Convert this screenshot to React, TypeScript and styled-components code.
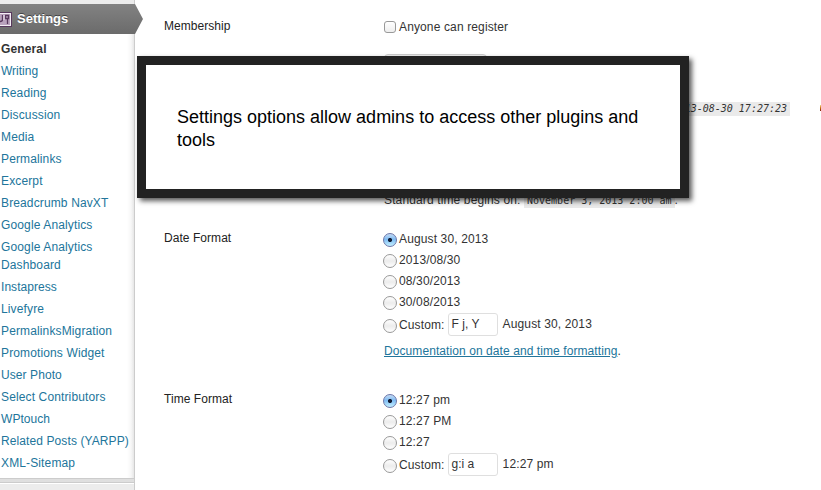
import React from 'react';
import styled, { createGlobalStyle, css } from 'styled-components';

const Global = createGlobalStyle`
  *, *::before, *::after { box-sizing: border-box; }
  body { margin: 0; background: #fff; overflow: hidden; }
`;

const Page = styled.div`
  position: relative;
  display: flex;
  width: 821px;
  height: 490px;
  overflow: hidden;
  background: #fff;
  color: #222;
  font: 12px/18px 'Liberation Sans', Arial, sans-serif;
  letter-spacing: 0.13px;
`;

const Sidebar = styled.nav`
  flex: 0 0 135px;
  min-width: 0;
  display: flex;
  flex-direction: column;
  padding-top: 4px;
  background: #ececec;
  border-right: 1px solid #ccc;
`;

const MenuHead = styled.div`
  position: relative;
  display: flex;
  align-items: center;
  width: 143px;
  height: 30px;
  flex: none;
  gap: 5px;
  background: linear-gradient(#828282, #6b6b6b);
  clip-path: polygon(0 0, 135px 0, 143px 50%, 135px 100%, 0 100%);
  color: #fff;
  font-size: 13px;
  font-weight: bold;
  letter-spacing: 0;
  text-shadow: 0 -1px 0 #444;
`;

const MenuList = styled.ul`
  flex: none;
  height: 444px;
  margin: 0;
  padding: 4px 0 0;
  list-style: none;
  background: linear-gradient(to left, #e6e6e6, #f7f7f7 3px, #fff 7px);
`;

const MenuItem = styled.li<{ $current?: boolean; $spacing?: number }>`
  padding: 2px 0 2px 1px;
  width: 134px;
  white-space: pre-line;
  color: #21759b;
  ${p => p.$spacing !== undefined && css`letter-spacing: ${p.$spacing}px;`}
  ${p => p.$current && css`color: #333; font-weight: bold;`}
`;

const Separator = styled.div`
  flex: none;
  height: 6px;
  border-top: 1px solid #ccc;
  border-bottom: 1px solid #fff;
  background: linear-gradient(#dfdfdf 3px, #ccc 3px);
`;

const Form = styled.main`
  flex: 1;
  padding: 17px 0 0 29px;
  min-width: 0;
`;

const Row = styled.section<{ $height: number }>`
  display: grid;
  grid-template-columns: 219px 1fr;
  height: ${p => p.$height}px;
`;

const Label = styled.div`
  letter-spacing: 0.05px;
`;

const Field = styled.div`
  margin-top: -1px;
  color: #333;
  white-space: nowrap;
`;

const Option = styled.label<{ $tall?: boolean }>`
  display: flex;
  align-items: center;
  gap: 2px;
  height: ${p => (p.$tall ? 25 : 21)}px;
`;

const Checkbox = styled.span`
  width: 12px;
  height: 12px;
  margin: 1px 1px 0;
  border: 1px solid #999;
  border-radius: 3px;
  background: linear-gradient(#fff, #eee);
`;

const Radio = styled.span<{ $on?: boolean }>`
  width: 14px;
  height: 14px;
  margin-top: 2px;
  border: 1px solid ${p => (p.$on ? '#6c76a8' : '#999')};
  border-radius: 50%;
  background: ${p => p.$on
    ? 'radial-gradient(circle, #111c33 0 1.7px, transparent 2.4px), linear-gradient(#c5dcf5, #7fbcf3 45%, #c4f0ff)'
    : 'linear-gradient(#fff, #ececec 50%, #fff)'};
`;

const Input = styled.span`
  width: 50px;
  height: 23px;
  margin: 0 3px 0 1px;
  padding: 1px 3px;
  border: 1px solid #dfdfdf;
  border-radius: 3px;
  background: #fff;
  letter-spacing: 0;
`;

const Preview = styled.span`
  margin-top: -2px;
`;

const DocLine = styled.div`
  padding: 5px 0 0 1px;
  letter-spacing: 0.08px;
`;

const DocLink = styled.a`
  color: #21759b;
  text-decoration: underline;
`;

const Select = styled.div`
  width: 103px;
  height: 20px;
  margin: 1px 0 28px 1px;
  border: 1px solid #ccc;
  border-radius: 4px;
  background: #eee;
`;

const Code = styled.code<{ $italic?: boolean }>`
  padding: 1px 3px 2px;
  background: #eaeaea;
  font: ${p => (p.$italic ? 'italic ' : '')}10px/11px 'DejaVu Sans Mono', monospace;
  letter-spacing: 0;
`;

const UtcLine = styled.div`
  display: flex;
  align-items: center;
  justify-content: flex-end;
  height: 14px;
  padding-right: 31px;
`;

const StandardLine = styled.div`
  margin-top: 75px;
  padding-left: 1px;
`;

const Callout = styled.aside`
  position: absolute;
  left: 137px;
  top: 56px;
  width: 552px;
  height: 142px;
  padding: 41px 31px;
  border: 9px solid #222;
  background: #fff;
  box-shadow: 3px 3px 5px rgba(0, 0, 0, 0.65);
  color: #000;
  font-size: 18px;
  line-height: 23px;
  letter-spacing: 0;
`;

const EdgeMark = styled.span`
  position: absolute;
  left: 820px;
  top: 105px;
  width: 1px;
  height: 6px;
  background: linear-gradient(#f5d58a, #c8700f 50%, #7a1d0c);
`;

const SettingsIcon = () => (
  <svg width="12" height="16" viewBox="0 0 12 16">
    <rect x="-4" y="1.5" width="15.5" height="14" fill="#f4edf5" stroke="#58395d" />
    <rect x="-2" y="3" width="12" height="11" fill="#b9a2bd" />
    <path d="M2.5 4v4.5q0 2-2.5 2M5.5 4.5h3v3h-3zM7.5 7v6" fill="none" stroke="#58395d" strokeWidth="1.3" />
    <path d="M4 4v5" stroke="#f4edf5" />
  </svg>
);

const menu: { text: string; spacing?: number }[] = [
  { text: 'General' }, { text: 'Writing', spacing: 0 }, { text: 'Reading' }, { text: 'Discussion' },
  { text: 'Media' }, { text: 'Permalinks' }, { text: 'Excerpt' }, { text: 'Breadcrumb NavXT' },
  { text: 'Google Analytics' }, { text: 'Google Analytics\nDashboard' }, { text: 'Instapress', spacing: 0.05 },
  { text: 'Livefyre' }, { text: 'PermalinksMigration' }, { text: 'Promotions Widget' },
  { text: 'User Photo', spacing: 0.08 }, { text: 'Select Contributors' }, { text: 'WPtouch', spacing: 0.05 },
  { text: 'Related Posts (YARPP)', spacing: 0.1 }, { text: 'XML-Sitemap' },
];

const Choices = ({ options, custom, preview }: { options: string[]; custom: string; preview: string }) => (
  <>
    {options.map((o, i) => (
      <Option key={o}><Radio $on={i === 0} />{o}</Option>
    ))}
    <Option $tall><Radio />Custom: <Input>{custom}</Input><Preview>{preview}</Preview></Option>
  </>
);

export default function App() {
  return (
    <>
      <Global />
      <Page>
        <Sidebar>
          <MenuHead><SettingsIcon />Settings</MenuHead>
          <MenuList>
            {menu.map((m, i) => (
              <MenuItem key={m.text} $current={i === 0} $spacing={m.spacing}>{m.text}</MenuItem>
            ))}
          </MenuList>
          <Separator />
        </Sidebar>
        <Form>
          <Row $height={37}>
            <Label>Membership</Label>
            <Field><Option><Checkbox />Anyone can register</Option></Field>
          </Row>
          <Row $height={175}>
            <Label />
            <Field>
              <Select />
              <UtcLine><Code $italic>2013-08-30 17:27:23</Code></UtcLine>
              <StandardLine>Standard time begins on: <Code>November 3, 2013 2:00 am</Code>.</StandardLine>
            </Field>
          </Row>
          <Row $height={161}>
            <Label>Date Format</Label>
            <Field>
              <Choices options={['August 30, 2013', '2013/08/30', '08/30/2013', '30/08/2013']} custom="F j, Y" preview="August 30, 2013" />
              <DocLine><DocLink>Documentation on date and time formatting</DocLink>.</DocLine>
            </Field>
          </Row>
          <Row $height={100}>
            <Label>Time Format</Label>
            <Field>
              <Choices options={['12:27 pm', '12:27 PM', '12:27']} custom="g:i a" preview="12:27 pm" />
            </Field>
          </Row>
        </Form>
        <EdgeMark />
        <Callout>Settings options allow admins to access other plugins and tools</Callout>
      </Page>
    </>
  );
}
